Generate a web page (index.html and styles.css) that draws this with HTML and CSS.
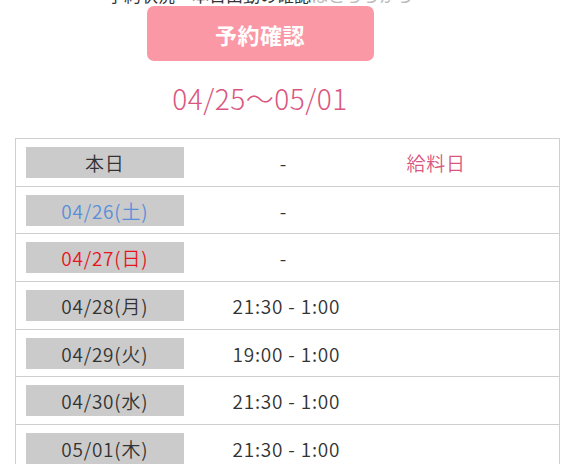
FILE: index.html
```html
<!DOCTYPE html>
<html lang="ja">
<head>
<meta charset="utf-8">
<link rel="stylesheet" href="styles.css">
</head>
<body>
<div class="page">
  <div class="top">
    <p class="note"><span class="dark">予約状況・本日出勤の確認</span><span class="light">はこちらから</span></p>
    <a class="btn">予約確認</a>
    <h2 class="range">04/25〜05/01</h2>
  </div>
  <table class="sched">
    <colgroup><col class="c1"><col class="c2"><col class="c3"></colgroup>
    <tr><td class="lab"><span>本日</span></td><td class="time center">-</td><td class="memo">給料日</td></tr>
    <tr><td class="lab"><span class="sat">04/26(土)</span></td><td class="time center">-</td><td class="memo"></td></tr>
    <tr><td class="lab"><span class="sun">04/27(日)</span></td><td class="time center">-</td><td class="memo"></td></tr>
    <tr><td class="lab"><span>04/28(月)</span></td><td class="time">21:30 - 1:00</td><td class="memo"></td></tr>
    <tr><td class="lab"><span>04/29(火)</span></td><td class="time">19:00 - 1:00</td><td class="memo"></td></tr>
    <tr><td class="lab"><span>04/30(水)</span></td><td class="time">21:30 - 1:00</td><td class="memo"></td></tr>
    <tr><td class="lab"><span>05/01(木)</span></td><td class="time">21:30 - 1:00</td><td class="memo"></td></tr>
  </table>
</div>
</body>
</html>
```
FILE: styles.css
```css
html, body { margin: 0; padding: 0; background: #fff; }
body { font-family: "Noto Sans CJK JP", "Noto Sans", sans-serif; color: #333; overflow: hidden; }
.page { width: 576px; height: 464px; overflow: hidden; }
.top { width: 520px; display: flex; flex-direction: column; align-items: center; }
.note { flex-shrink: 0; margin: -16px 0 0 0; font-size: 17px; line-height: 22px; height: 22px; white-space: nowrap; }
.note .dark { color: #333; }
.note .light { color: #bbb; }
.btn { flex-shrink: 0; display: flex; align-items: center; justify-content: center; width: 227px; height: 55px; background: #fb98a6; border-radius: 7px; color: #fff; font-size: 22px; font-weight: 700; letter-spacing: 0.5px; }
.range { flex-shrink: 0; margin: 20px 0 0 0; font-size: 28px; font-weight: 300; line-height: 34px; color: #d9577f; letter-spacing: 0.5px; }
.sched { margin: 23px 0 0 15px; width: 545px; border-collapse: collapse; border: 1px solid #cfcfcf; font-size: 19px; font-weight: 350; letter-spacing: 0.8px; }
.sched col.c1 { width: 178px; }
.sched col.c2 { width: 200px; }
.sched td { border-top: 1px solid #cfcfcf; height: 46.7px; padding: 0; vertical-align: middle; }
.sched td.lab { padding: 0 10px; }
.lab span { display: block; height: 31px; line-height: 31px; background: #cbcbcb; text-align: center; color: #333; }
.lab span.sat { color: #5a8ed9; }
.lab span.sun { color: #e8141e; }
.time { padding-left: 39px !important; text-align: left; }
.time.center { padding-left: 0 !important; text-align: center; padding-right: 20px !important; }
.memo { color: #d9577f; padding-left: 13px !important; }
```
